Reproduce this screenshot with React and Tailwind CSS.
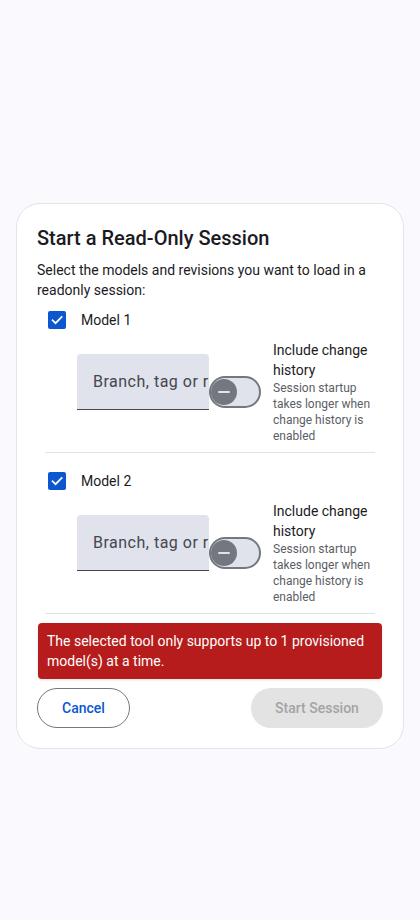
import React from "react";

function Check() {
  return (
    <div className="w-[18px] h-[18px] rounded-[2px] bg-[#0b57d0] flex items-center justify-center">
      <svg width="14" height="14" viewBox="0 0 24 24" fill="none">
        <path d="M4.5 12.5l5 5L20 7" stroke="#fff" strokeWidth="3" strokeLinecap="square" />
      </svg>
    </div>
  );
}

function Switch() {
  return (
    <div className="relative w-[52px] h-8 shrink-0 rounded-full border-2 border-[#74777f] bg-[#e0e2ec]">
      <div className="absolute left-[0px] top-1/2 -translate-y-1/2 w-[26px] h-[26px] rounded-full bg-[#74777f] flex items-center justify-center">
        <div className="w-[12px] h-[2px] rounded-full bg-[#e0e2ec]"></div>
      </div>
    </div>
  );
}

function ModelItem({ label, first }) {
  return (
    <div className={first ? "border-b border-[#e2e2e6] pb-2" : "border-b border-[#e2e2e6] pt-3 pb-2"}>
      <div className="h-8 flex items-center pl-[3px]">
        <Check />
        <span className="ml-[15px] text-[14px] text-[#1b1b1f]">{label}</span>
      </div>
      <div className="mt-1 flex items-center pl-8">
        <div className="pb-[20px]">
          <div className="w-[132px] h-14 bg-[#e0e2ec] rounded-t-[4px] border-b border-[#44474e] flex items-center pl-4 overflow-hidden whitespace-nowrap text-[16px] tracking-[0.5px] text-[#44474e]">
            Branch, tag or revision
          </div>
        </div>
        <Switch />
        <div className="ml-3 w-[104px]">
          <div className="text-[14px] leading-5 text-[#1b1b1f]">Include change history</div>
          <div className="text-[12px] leading-4 text-[#5b5e66]">Session startup takes longer when change history is enabled</div>
        </div>
      </div>
    </div>
  );
}

export default function App() {
  return (
    <div className="min-h-[920px] bg-[#f9f9fe] pt-[203px] px-4" style={{ fontFamily: "Roboto, 'Liberation Sans', sans-serif" }}>
      <div className="bg-white border border-[#e3e3ea] rounded-[24px] px-5 pt-5 pb-5">
        <h1 className="text-[20px] leading-7 font-medium text-[#1b1b1f]">Start a Read-Only Session</h1>
        <p className="mt-2 text-[14px] leading-5 text-[#1b1b1f]">Select the models and revisions you want to load in a readonly session:</p>
        <div className="mt-1 mx-2">
          <ModelItem label="Model 1" first />
          <ModelItem label="Model 2" />
        </div>
        <div className="mt-[9px] mx-px rounded-[4px] bg-[#b71c1c] shadow-sm pl-[9px] pr-2 py-2 text-[14px] leading-5 text-white">
          The selected tool only supports up to 1 provisioned model(s) at a time.
        </div>
        <div className="mt-[9px] flex justify-between">
          <button className="h-10 w-[93px] rounded-full border border-[#74777f] text-[14px] font-medium text-[#0b57d0]">Cancel</button>
          <button className="h-10 w-[132px] rounded-full bg-[#e3e3e3] text-[14px] font-medium text-[#a3a3a3]">Start Session</button>
        </div>
      </div>
    </div>
  );
}
